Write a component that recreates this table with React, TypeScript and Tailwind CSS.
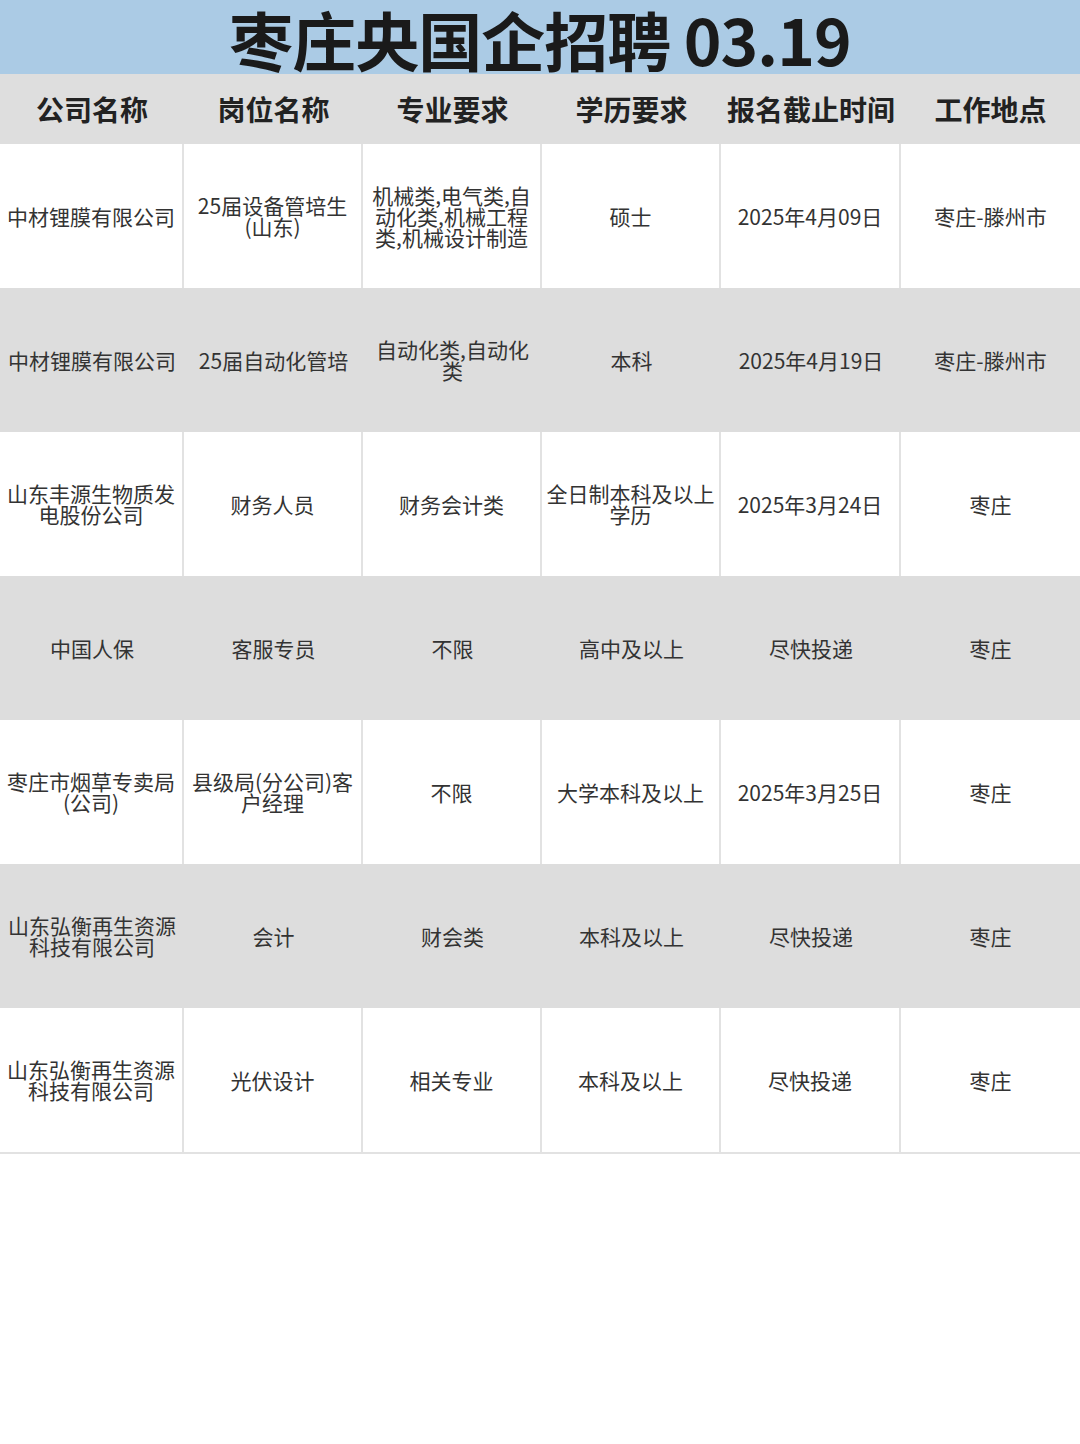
const rows: string[][][] = [
  [["中材锂膜有限公司"], ["25届设备管培生", "(山东)"], ["机械类,电气类,自", "动化类,机械工程", "类,机械设计制造"], ["硕士"], ["2025年4月09日"], ["枣庄-滕州市"]],
  [["中材锂膜有限公司"], ["25届自动化管培"], ["自动化类,自动化", "类"], ["本科"], ["2025年4月19日"], ["枣庄-滕州市"]],
  [["山东丰源生物质发", "电股份公司"], ["财务人员"], ["财务会计类"], ["全日制本科及以上", "学历"], ["2025年3月24日"], ["枣庄"]],
  [["中国人保"], ["客服专员"], ["不限"], ["高中及以上"], ["尽快投递"], ["枣庄"]],
  [["枣庄市烟草专卖局", "(公司)"], ["县级局(分公司)客", "户经理"], ["不限"], ["大学本科及以上"], ["2025年3月25日"], ["枣庄"]],
  [["山东弘衡再生资源", "科技有限公司"], ["会计"], ["财会类"], ["本科及以上"], ["尽快投递"], ["枣庄"]],
  [["山东弘衡再生资源", "科技有限公司"], ["光伏设计"], ["相关专业"], ["本科及以上"], ["尽快投递"], ["枣庄"]],
];

const headers = ["公司名称", "岗位名称", "专业要求", "学历要求", "报名截止时间", "工作地点"];

const cols = "grid grid-cols-[184px_179px_179px_179px_180px_179px]";

export default function App() {
  return (
    <div
      className="w-[1080px] min-h-[1444px] bg-white text-[#333]"
      style={{ fontFamily: '"Noto Sans CJK SC", "Noto Sans", sans-serif' }}
    >
      <div className="h-[74px] bg-[#abcbe5] flex items-center justify-center">
        <h1 className="text-[64px] font-bold leading-none text-[#1a1a1a] pt-[2px] tracking-[-1px]">
          枣庄央国企招聘 03.19
        </h1>
      </div>

      <div className={`${cols} h-[70px] bg-[#dedede]`}>
        {headers.map((h) => (
          <div key={h} className="flex items-center justify-center text-[28px] font-bold text-[#222]">
            {h}
          </div>
        ))}
      </div>

      {rows.map((row, i) => {
        const gray = i % 2 === 1;
        return (
          <div key={i} className={`${cols} h-[144px] ${gray ? "bg-[#dddddd]" : "bg-white"}`}>
            {row.map((cell, j) => (
              <div
                key={j}
                className={`flex flex-col items-center justify-center text-[21px] leading-[21px] whitespace-nowrap ${
                  !gray && j < 5 ? "border-r-2 border-[#e2e2e2]" : ""
                }`}
              >
                {cell.map((line, k) => (
                  <span key={k}>{line}</span>
                ))}
              </div>
            ))}
          </div>
        );
      })}
      <div className="h-[2px] bg-[#e2e2e2]" />
    </div>
  );
}
